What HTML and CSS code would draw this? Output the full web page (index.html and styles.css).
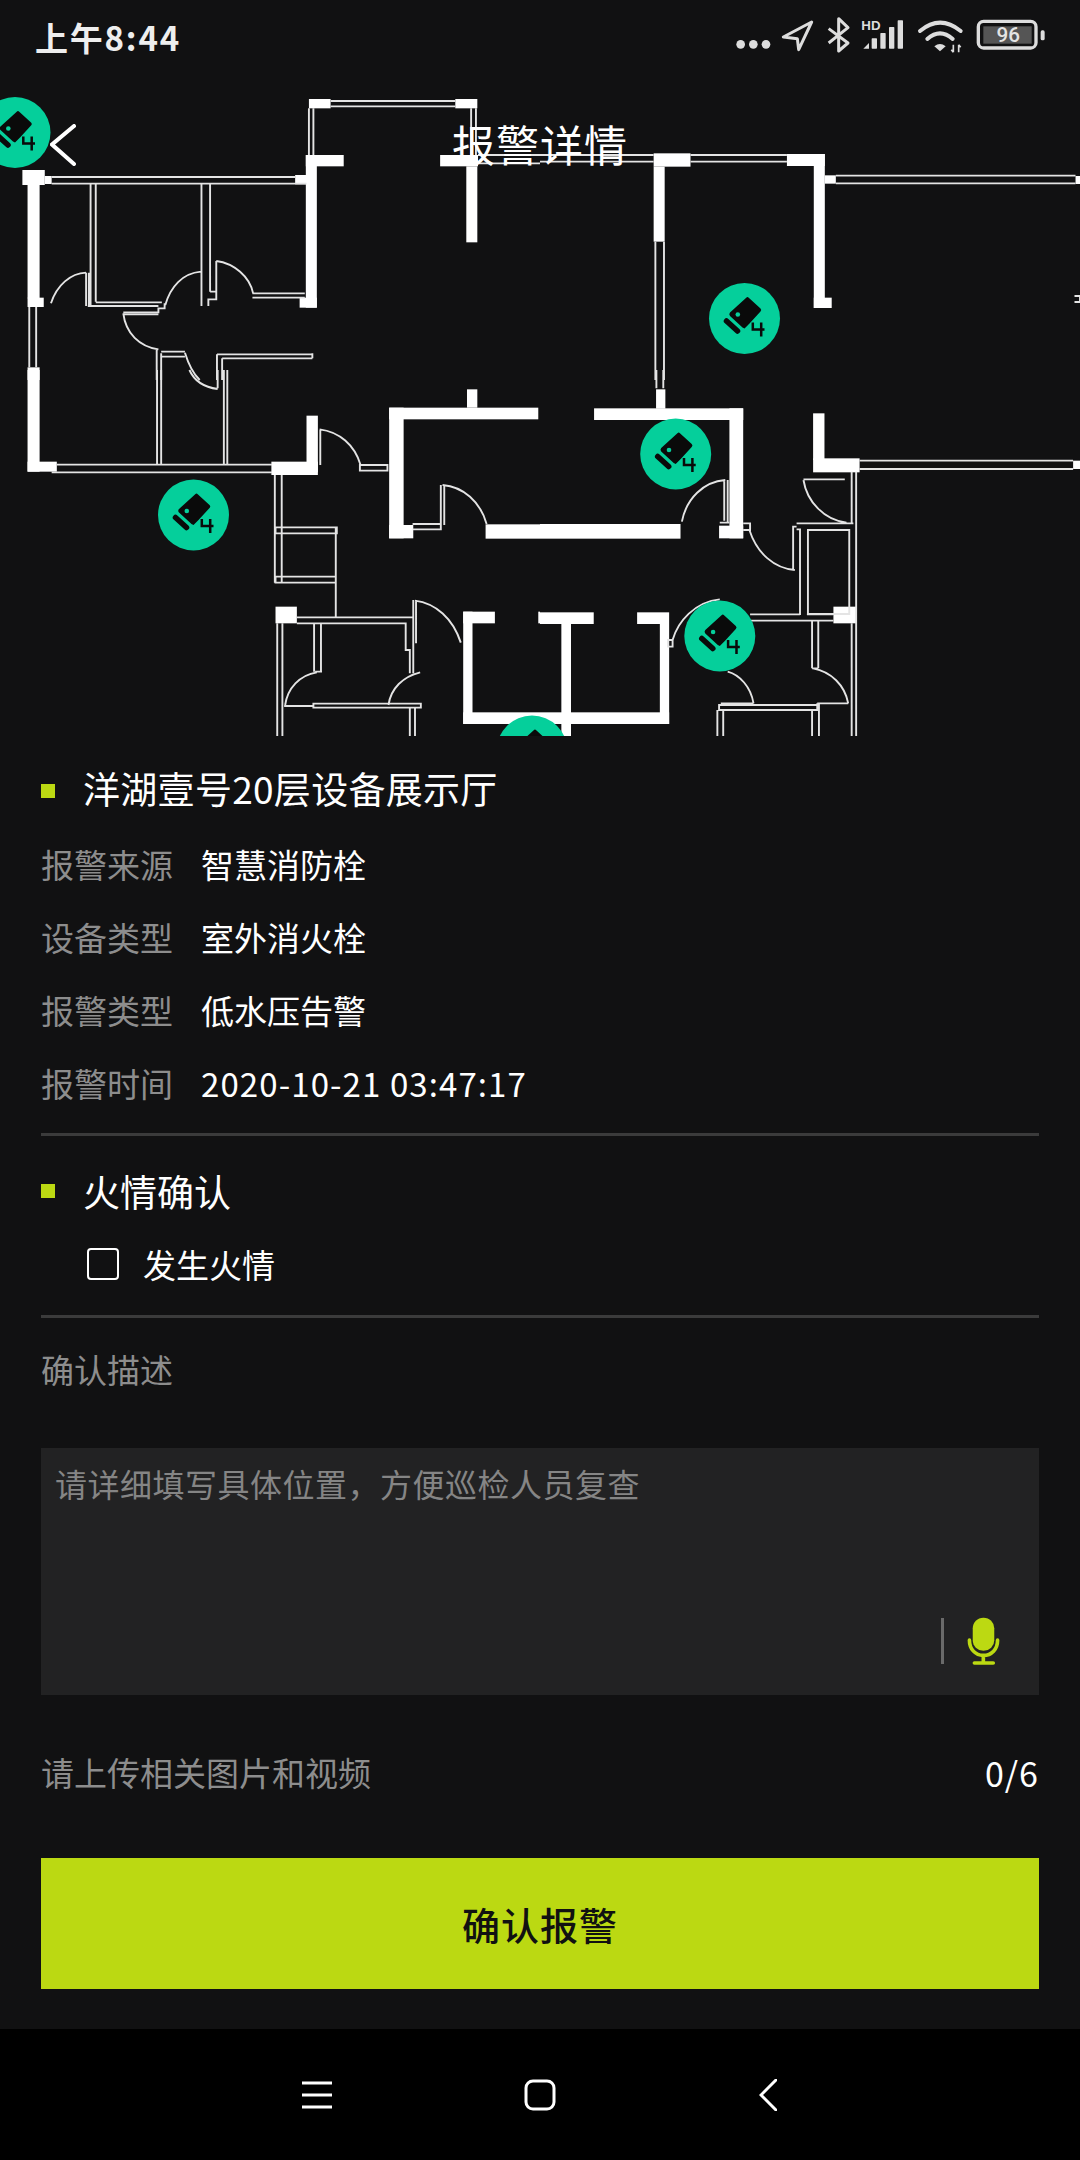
FILE: index.html
```html
<!DOCTYPE html>
<html lang="zh-CN">
<head>
<meta charset="utf-8">
<title>报警详情</title>
<link rel="stylesheet" href="styles.css">
</head>
<body>
<svg class="defs" width="0" height="0" aria-hidden="true">
  <defs>
    <g id="cam">
      <circle class="mk" r="35.5"/>
      <path class="cam-body" d="M2 -21Q3 -22 4.500 -20.500L16 -10Q17.500 -8.500 16 -7L5 5L0 10L-2 9L-14.500 -2.500Q-16 -4.500 -14.500 -6Z"/>
      <circle class="cam-dot" cx="-6.700" cy="-4" r="2.300"/>
      <path class="cam-base" d="M-18 2.500L-7 12.500"/>
      <path class="cam-mount" d="M8.300 4V11H20M16.700 4V18"/>
    </g>
  </defs>
</svg>
<section class="plan">
  <svg class="plan-svg" viewBox="0 0 1080 736" width="1080" height="736">
    <g transform="scale(.34439 .33333)">
      <g class="wall">
        <rect x="897" y="297" width="63" height="28"/><rect x="1322" y="297" width="64" height="28"/>
        <rect x="888" y="465" width="110" height="34"/><rect x="888" y="465" width="32" height="458"/><rect x="870" y="893" width="50" height="30"/>
        <rect x="1278" y="465" width="110" height="34"/><rect x="1354" y="499" width="32" height="228"/>
        <rect x="65" y="510" width="65" height="45"/><rect x="130" y="528" width="20" height="24"/><rect x="80" y="555" width="35" height="340"/><rect x="80" y="893" width="47" height="28"/>
        <rect x="857" y="525" width="32" height="28"/><rect x="80" y="1102" width="35" height="38"/>
      </g>
      <path class="thin" d="M960 303H1322M960 319H1322M897 325V465M910 325V465M1368 325V465M1382 325V465M1388 465H1568M1388 490H1568M150 531H857M150 551H890M263 552V915M278 552V905M585 552V918M610 552V875M278 907H470M255 918H460M148 910C165 855 205 820 250 818M250 818V918M258 818V915M480 915C495 860 530 820 583 815M358 937H460V925H478V910M358 943H460M610 875H628V783M605 918V898H628V875M628 783C680 790 725 830 735 880M733 880H885M733 893H885M358 940C365 1000 405 1040 460 1048M85 921V1102M105 921V1102M455 1048V1140M468 1060V1140M468 1055H537M468 1070H537M537 1058C548 1095 565 1125 580 1140M630 1063V1140M645 1075V1140M630 1063H907M645 1075H907M907 1060V1075"/>
    </g>
    <g transform="translate(540 0) scale(.34439 .33333)">
      <g class="wall">
        <rect x="330" y="460" width="107" height="40"/><rect x="330" y="500" width="32" height="225"/><rect x="717" y="462" width="110" height="36"/><rect x="795" y="462" width="32" height="462"/><rect x="795" y="893" width="52" height="31"/><rect x="827" y="526" width="32" height="25"/><rect x="1555" y="528" width="13" height="24"/>
      </g>
      <path class="thin" d="M0 465H330M0 485H330M437 465H717M437 485H717M335 725V1140M360 725V1140M859 527H1555M859 550H1555M1552 888H1568V906H1552"/>
    </g>
    <g transform="translate(0 370) scale(.34439 .33333)">
      <g class="wall">
        <rect x="80" y="0" width="35" height="305"/><rect x="80" y="275" width="85" height="30"/><rect x="788" y="275" width="135" height="40"/><rect x="890" y="137" width="33" height="170"/>
        <rect x="1130" y="113" width="433" height="35"/><rect x="1130" y="113" width="42" height="392"/><rect x="1130" y="465" width="70" height="40"/><rect x="1356" y="58" width="30" height="55"/><rect x="1410" y="463" width="158" height="43"/>
        <rect x="800" y="710" width="62" height="50"/><rect x="1345" y="725" width="92" height="35"/><rect x="1345" y="725" width="27" height="337"/><rect x="1345" y="1027" width="223" height="35"/><rect x="1563" y="725" width="5" height="35"/>
      </g>
      <path class="thin" d="M165 284H790M150 307H790M456 0V284M468 0V284M650 0V284M660 0V284M632 0V55M550 0C565 35 595 52 632 57M930 180V285M928 178C985 185 1030 225 1047 285M1045 285H1125V302H1045ZM1198 462H1280M1198 478H1280V345M1290 465V345M1285 345C1345 350 1395 395 1413 462M798 315V638M818 315V638M800 472H978V490H800ZM800 620H975V638H800ZM975 472V740M862 742H1200M862 760H1178V840H1190V910M912 760V905M932 760V905M915 905H935M828 1005C835 955 870 915 920 907M805 760V1098M820 760V1098M825 1008H910M910 1001H1222V1013H910ZM1200 910V690M1208 690V820M1205 692C1265 700 1315 745 1338 818M1128 1005C1135 955 1170 920 1220 907M1190 1013V1098M1205 1013V1098"/>
    </g>
    <g transform="translate(540 370) scale(.34439 .33333)">
      <g class="wall">
        <rect x="337" y="58" width="27" height="58"/><rect x="157" y="115" width="433" height="35"/><rect x="550" y="115" width="40" height="390"/><rect x="520" y="467" width="70" height="38"/><rect x="0" y="462" width="408" height="44"/>
        <rect x="793" y="130" width="33" height="140"/><rect x="793" y="265" width="135" height="42"/><rect x="1548" y="272" width="20" height="25"/><rect x="852" y="710" width="66" height="50"/>
        <rect x="0" y="727" width="156" height="35"/><rect x="282" y="727" width="93" height="35"/><rect x="348" y="762" width="27" height="300"/><rect x="62" y="762" width="28" height="336"/><rect x="0" y="1027" width="375" height="35"/>
      </g>
      <path class="thin" d="M338 0V55M358 0V55M412 455C425 385 475 335 538 330M535 330V452M545 330V455M522 458H550M590 460H610V480H590M608 480C630 550 680 595 740 600M735 600V470H745M745 478H755V735M745 460H910M778 480H898V732H778ZM905 305V460M918 305V1098M928 272H1548M928 297H1548M765 330C775 395 825 450 890 458M765 328H885M610 733H755M610 752H852M775 733H852M905 760V1098M790 752V895M808 752V895M790 895H808M793 895C845 905 885 945 895 1000M805 1000H895M385 810C400 755 450 695 522 688M372 810H385V830H372ZM545 905C580 915 612 950 620 1000M525 1000H620M520 1005H810V1020H520ZM515 1020V1098M532 1020V1098M790 1020V1098M810 1020V1098M805 1000V1018"/>
    </g>
    <use href="#cam" x="15" y="132.500"/>
    <use href="#cam" x="744.500" y="318.500"/>
    <use href="#cam" x="193.500" y="515"/>
    <use href="#cam" x="675.700" y="454"/>
    <use href="#cam" x="719.800" y="636"/>
    <use href="#cam" x="532" y="751"/>
  </svg>
  <div class="top">
    <div class="status">
      <span class="time">上午8:44</span>
      <svg class="status-icons" viewBox="0 0 1020 180" width="340" height="60">
        <g class="st-fill">
          <circle cx="62" cy="112" r="13"/><circle cx="100" cy="112" r="13"/><circle cx="138" cy="112" r="13"/>
          <path d="M430 125H447V108Z"/>
          <rect x="455" y="94" width="16" height="31" rx="2"/><rect x="481" y="78" width="16" height="47" rx="2"/><rect x="507" y="60" width="16" height="65" rx="2"/><rect x="533" y="40" width="16" height="85" rx="2"/>
          <path d="M643 118Q660 104 677 118L660 133Z"/>
          <rect x="962" y="70" width="12" height="30" rx="5"/>
          <text class="hd" x="424" y="68">HD</text>
        </g>
        <g class="st-line">
          <path d="M275 45L190 90L232 95L236 128Z"/>
          <path d="M326 65L384 108L356 132V35L384 62L326 108"/>
          <path class="wf" d="M600 72Q660 22 722 72M622 96Q660 62 698 96"/>
          <path class="ud" d="M700 113V136M694 128L700 136M716 113V136M716 113L722 121"/>
          <rect class="bt" x="775" y="43" width="173" height="80" rx="16"/>
        </g>
        <rect class="bt-in" x="790" y="58" width="145" height="52"/>
        <text class="bt-num" x="865" y="104">96</text>
      </svg>
    </div>
    <header class="head">
      <svg class="back" viewBox="0 0 26 42" width="26" height="42"><path d="M24 2L2 20.500L24 40"/></svg>
      <h1 class="page-title">报警详情</h1>
    </header>
  </div>
</section>
<main class="main">
  <h2 class="sec sec-first"><i class="sq"></i><span class="sec-text">洋湖壹号20层设备展示厅</span></h2>
  <div class="row"><span class="lbl">报警来源</span><span class="val">智慧消防栓</span></div>
  <div class="row"><span class="lbl">设备类型</span><span class="val">室外消火栓</span></div>
  <div class="row"><span class="lbl">报警类型</span><span class="val">低水压告警</span></div>
  <div class="row"><span class="lbl">报警时间</span><span class="val val-num">2020-10-21 03:47:17</span></div>
  <hr class="rule rule-a">
  <h2 class="sec sec-second"><i class="sq"></i>火情确认</h2>
  <label class="check"><i class="box"></i>发生火情</label>
  <hr class="rule rule-b">
  <div class="lbl desc">确认描述</div>
  <div class="area">
    <span class="ph">请详细填写具体位置，方便巡检人员复查</span>
    <div class="tools">
      <i class="bar"></i>
      <svg class="mic" viewBox="260 105 105 148" width="35" height="49">
        <rect class="mic-cap" x="280" y="110" width="65" height="100" rx="32"/>
        <path class="mic-arc" d="M270 178C270 205 288 224 312 224C337 224 355 205 355 178M312 224V246M285 247H342"/>
      </svg>
    </div>
  </div>
  <div class="upload"><span class="lbl">请上传相关图片和视频</span><span class="count">0/6</span></div>
  <button class="submit">确认报警</button>
</main>
<nav class="nav">
  <svg class="n-menu" viewBox="0 0 30 30" width="30" height="30"><path d="M0 3H30M0 15H30M0 27H30"/></svg>
  <svg class="n-home" viewBox="0 0 32 32" width="32" height="32"><rect x="2" y="2" width="28" height="28" rx="7"/></svg>
  <svg class="n-back" viewBox="0 0 18 32" width="18" height="32"><path d="M17 1L2 16L17 31"/></svg>
</nav>
</body>
</html>
```
FILE: styles.css
```css
* { box-sizing: border-box; }
html, body { margin: 0; padding: 0; }
body {
  width: 1080px;
  height: 2160px;
  background: #111112;
  color: #fff;
  font-family: "Noto Sans CJK SC", "Noto Sans", sans-serif;
  display: flex;
  flex-direction: column;
  overflow: hidden;
}
.defs { position: absolute; }

.plan { position: relative; height: 736px; flex: none; overflow: hidden; }
.plan-svg { display: block; }
.wall rect { fill: #fff; }
.thin { fill: none; stroke: #e4e4e4; stroke-width: 1.900px; vector-effect: non-scaling-stroke; }
.mk { fill: #05cf9b; }
.cam-body { fill: #0a0a0a; }
.cam-dot { fill: #05cf9b; }
.cam-base { stroke: #0a0a0a; stroke-width: 5.500px; stroke-linecap: round; fill: none; }
.cam-mount { stroke: #0a0a0a; stroke-width: 2.500px; fill: none; }

.top { position: absolute; left: 0; right: 0; top: 0; }
.status {
  height: 76px;
  padding: 0 20px 0 35px;
  display: flex;
  align-items: center;
  justify-content: space-between;
}
.time { font-size: 33px; font-weight: 700; color: #eee; letter-spacing: 1.800px; padding-bottom: 2px; }
.status-icons { display: block; margin-top: -2px; }
.st-fill { fill: #ddd; }
.st-line { fill: none; stroke: #ddd; stroke-width: 9px; stroke-linejoin: round; }
.wf { stroke-width: 12px; stroke-linecap: round; }
.ud { stroke-width: 5px; }
.bt { stroke-width: 10px; }
.bt-in { fill: #555; }
.hd { font-family: "Liberation Sans", sans-serif; font-size: 40px; font-weight: 700; }
.bt-num { fill: #e4e4e4; font-family: "Roboto", sans-serif; font-size: 62px; font-weight: 500; text-anchor: middle; }

.head {
  height: 138px;
  display: grid;
  grid-template-columns: 1fr auto 1fr;
  align-items: center;
  padding-left: 50px;
  padding-right: 50px;
}
.back { display: block; }
.back path { fill: none; stroke: #fff; stroke-width: 4px; stroke-linecap: round; }
.page-title { margin: 0 0 5px; font-size: 43px; font-weight: 400; letter-spacing: 1px; grid-column: 2; color: #fff; }

.main { flex: 1; padding: 0 41px; display: flex; flex-direction: column; }
.sec {
  margin: 0;
  height: 73px;
  display: flex;
  align-items: center;
  font-size: 37px;
  font-weight: 400;
  color: #fff;
}
.sec-first { margin-top: 18px; letter-spacing: .3px; }
.sec-text { margin-bottom: 5px; }
.sec-second { margin-top: 18px; }
.sq { width: 14px; height: 14px; background: #bcd912; margin-right: 28px; flex: none; }
.row { height: 73px; display: flex; align-items: center; font-size: 33px; }
.lbl { color: #8d8d8d; font-size: 33px; }
.row .lbl { width: 160px; flex: none; }
.val { color: #fff; }
.val-num { letter-spacing: 1.100px; }
.rule { margin: 0; border: 0; height: 3px; background: #3b3b3b; flex: none; }
.rule-a { margin-top: 14px; }
.check {
  height: 74px;
  padding-left: 46px;
  display: flex;
  align-items: center;
  font-size: 33px;
  color: #fff;
}
.box { width: 32px; height: 32px; border: 2px solid #fff; border-radius: 4px; margin-right: 24px; flex: none; }
.rule-b { margin-top: 14px; }
.desc { margin-top: 26px; line-height: 50px; }
.area {
  margin-top: 54px;
  height: 247px;
  background: #222223;
  padding: 13px 38px 30px 14px;
  display: flex;
  flex-direction: column;
  justify-content: space-between;
  flex: none;
}
.ph { color: #858585; font-size: 32px; line-height: 44px; letter-spacing: .5px; }
.tools { display: flex; align-items: center; justify-content: flex-end; gap: 22px; }
.bar { width: 3px; height: 46px; background: #6a6a6a; display: block; }
.mic { display: block; }
.mic-cap { fill: #bcd912; }
.mic-arc { fill: none; stroke: #bcd912; stroke-width: 11px; stroke-linecap: round; }
.upload { margin-top: 52px; height: 50px; display: flex; align-items: center; justify-content: space-between; }
.count { font-size: 34px; color: #fff; letter-spacing: 1px; }
.submit {
  margin-top: 61px;
  height: 131px;
  border: 0;
  padding: 0;
  background: #bbd912;
  color: #111;
  font-family: inherit;
  font-size: 38px;
  font-weight: 500;
  letter-spacing: 1px;
  flex: none;
}
.nav {
  flex: none;
  height: 131px;
  background: #000;
  display: flex;
  align-items: center;
  padding: 0 0 0 302px;
}
.nav svg { display: block; }
.n-home { margin-left: 192px; }
.n-back { margin-left: 203px; }
.nav path, .nav rect { fill: none; stroke: #fff; stroke-width: 3px; stroke-linecap: round; }
```
